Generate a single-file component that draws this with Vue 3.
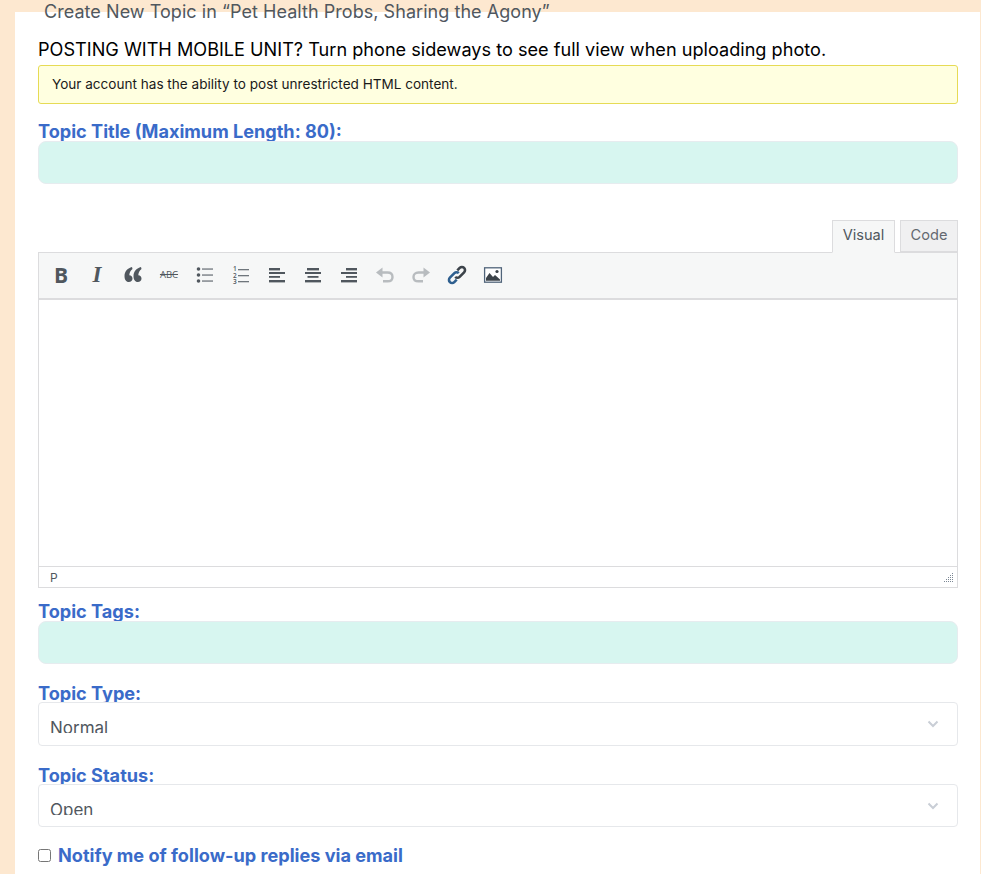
<script setup>
// each row of the align icons: [x, y, width, height]
const alignIcons = [
  { name: 'left', rows: [[2, 3, 11, 2.4], [2, 7, 16, 2], [2, 11, 11, 1.8], [2, 15, 16, 2.4]] },
  { name: 'center', rows: [[4, 3, 12, 2.4], [2, 7, 16, 2], [4.500, 11, 11, 1.8], [2, 15, 16, 2.4]] },
  { name: 'right', rows: [[7, 3, 11, 2.4], [2, 7, 16, 2], [7, 11, 11, 1.8], [2, 15, 16, 2.4]] }
]
</script>

<template>
  <div class="page">
    <div class="card">
      <h2 class="heading">Create New Topic in “Pet Health Probs, Sharing the Agony”</h2>
      <p class="mobile-note">POSTING WITH MOBILE UNIT? Turn phone sideways to see full view when uploading photo.</p>
      <div class="notice">Your account has the ability to post unrestricted HTML content.</div>

      <label class="field-label title-label">Topic Title (Maximum Length: 80):</label>
      <input class="text-input" type="text" />

      <div class="editor-tabs">
        <button class="tab tab-active" type="button">Visual</button>
        <button class="tab" type="button">Code</button>
      </div>
      <div class="editor">
        <div class="toolbar">
          <span class="tool glyph-b">B</span>
          <span class="tool glyph-i">I</span>
          <span class="tool">
            <svg width="20" height="20" viewBox="0 0 20 20">
              <path fill="#50575e" d="M9 2C5 3 1.500 6 1.500 11c0 3.500 1.500 6 4.300 6 2.200 0 3.700-1.400 3.700-3.500 0-2-1.300-3.300-3.200-3.300C6.400 8 7.500 5.500 9.500 4z" />
              <path fill="#50575e" d="M18 2c-4 1-7.500 4-7.500 9 0 3.500 1.500 6 4.300 6 2.200 0 3.700-1.400 3.700-3.500 0-2-1.300-3.300-3.200-3.300.1-2.200 1.200-4.700 3.200-6.200z" />
            </svg>
          </span>
          <span class="tool glyph-abc">ABC</span>
          <span class="tool">
            <svg width="20" height="20" viewBox="0 0 20 20">
              <g fill="#50575e">
                <circle cx="3.500" cy="4" r="1.800" />
                <circle cx="3.500" cy="10" r="1.800" />
                <circle cx="3.500" cy="16" r="1.800" />
              </g>
              <g fill="#6f767c">
                <rect x="7" y="3.400" width="11" height="1.300" />
                <rect x="7" y="9.400" width="11" height="1.300" />
                <rect x="7" y="15.400" width="11" height="1.300" />
              </g>
            </svg>
          </span>
          <span class="tool">
            <svg width="20" height="20" viewBox="0 0 20 20">
              <g fill="#50575e" font-family="Open Sans, sans-serif" font-size="6.500" font-weight="600">
                <text x="2" y="6">1</text>
                <text x="2" y="12.500">2</text>
                <text x="2" y="19">3</text>
              </g>
              <g fill="#6f767c">
                <rect x="7" y="4" width="11" height="1.300" />
                <rect x="7" y="10" width="11" height="1.300" />
                <rect x="7" y="16" width="11" height="1.300" />
              </g>
            </svg>
          </span>
          <span v-for="icon in alignIcons" :key="icon.name" class="tool">
            <svg width="20" height="20" viewBox="0 0 20 20" fill="#50575e">
              <rect v-for="(r, i) in icon.rows" :key="i" :x="r[0]" :y="r[1]" :width="r[2]" :height="r[3]" />
            </svg>
          </span>
          <span class="tool">
            <svg width="20" height="20" viewBox="0 0 20 20" fill="none">
              <path stroke="#b8bcbf" stroke-width="2.400" d="M6 7.500h6.500c3.200 0 5 1.900 5 4.400s-1.800 4.400-5 4.400H8" />
              <path fill="#b8bcbf" d="M1 7.500 7.500 2.500v10z" />
            </svg>
          </span>
          <span class="tool">
            <svg width="20" height="20" viewBox="0 0 20 20" fill="none">
              <path stroke="#b8bcbf" stroke-width="2.400" d="M14 7.500H7.500c-3.200 0-5 1.900-5 4.400s1.800 4.400 5 4.400H12" />
              <path fill="#b8bcbf" d="M19 7.500 12.500 2.500v10z" />
            </svg>
          </span>
          <span class="tool">
            <svg width="20" height="20" viewBox="0 0 20 20" fill="none" stroke-width="2.600">
              <path stroke="#3c434a" d="M8.200 11.800a3.100 3.100 0 0 0 4.400 0l4.500-4.500a3.100 3.100 0 0 0-4.400-4.400l-2.400 2.400" />
              <path stroke="#2e5f8f" d="M11.800 8.200a3.100 3.100 0 0 0-4.400 0l-4.500 4.500a3.100 3.100 0 0 0 4.400 4.400l2.400-2.400" />
            </svg>
          </span>
          <span class="tool">
            <svg width="20" height="20" viewBox="0 0 20 20">
              <rect x="1.600" y="2.800" width="16.800" height="14.400" fill="#fff" stroke="#50647a" stroke-width="1.300" />
              <path fill="#3c434a" d="M3 15.800V13l3.500-5 3.500 4 2-2 5 4.500v1.300z" />
              <circle cx="14" cy="6.500" r="1.600" fill="#3c434a" />
            </svg>
          </span>
        </div>
        <div class="editor-body"></div>
        <div class="statusbar">
          <span>P</span>
          <svg class="resize-grip" width="11" height="11" viewBox="0 0 11 11">
            <g fill="#7b8794">
              <rect x="9" y="1" width="1" height="1" />
              <rect x="7" y="3" width="1" height="1" /><rect x="9" y="3" width="1" height="1" />
              <rect x="5" y="5" width="1" height="1" /><rect x="7" y="5" width="1" height="1" /><rect x="9" y="5" width="1" height="1" />
              <rect x="3" y="7" width="1" height="1" /><rect x="5" y="7" width="1" height="1" /><rect x="7" y="7" width="1" height="1" /><rect x="9" y="7" width="1" height="1" />
              <rect x="1" y="9" width="1" height="1" /><rect x="3" y="9" width="1" height="1" /><rect x="5" y="9" width="1" height="1" /><rect x="7" y="9" width="1" height="1" /><rect x="9" y="9" width="1" height="1" />
            </g>
          </svg>
        </div>
      </div>

      <label class="field-label tags-label">Topic Tags:</label>
      <input class="text-input" type="text" />

      <label class="field-label type-label">Topic Type:</label>
      <div class="select-box"><span class="select-text">Normal</span>
        <svg class="chevron" width="12" height="8" viewBox="0 0 12 8" fill="none">
          <path d="M1.500 1.500 6 6l4.500-4.500" stroke="#c9ced6" stroke-width="2" />
        </svg>
      </div>

      <label class="field-label status-label">Topic Status:</label>
      <div class="select-box status-box"><span class="select-text">Open</span>
        <svg class="chevron" width="12" height="8" viewBox="0 0 12 8" fill="none">
          <path d="M1.500 1.500 6 6l4.500-4.500" stroke="#c9ced6" stroke-width="2" />
        </svg>
      </div>

      <label class="notify">
        <input type="checkbox" />
        <span>Notify me of follow-up replies via email</span>
      </label>
    </div>
  </div>
</template>

<style scoped>
.page {
  height: 874px;
  overflow: hidden;
  padding-top: 12px;
  padding-left: 15px;
  padding-right: 1px;
  box-sizing: border-box;
  background: #fde8d0;
  font-family: Inter, "Liberation Sans", sans-serif;
}

.card {
  display: flow-root;
  height: 862px;
  background: #fff;
  padding: 0 22px 0 23px;
  box-sizing: border-box;
}

.heading {
  margin: -12px 0 12px 6px;
  height: 24px;
  font-size: 18px;
  line-height: 24px;
  font-weight: 400;
  color: #50575e;
  letter-spacing: 0.05px;
}

.mobile-note {
  margin: 0;
  height: 29px;
  font-size: 18.13px;
  line-height: 26px;
  letter-spacing: 0.01px;
  color: #000;
}

.notice {
  height: 39px;
  box-sizing: border-box;
  border: 1px solid #e6db55;
  border-radius: 3px;
  background: #ffffe0;
  padding: 0 13px;
  font-size: 13.57px;
  line-height: 36px;
  color: #1a1a1a;
}

.field-label {
  display: block;
  height: 21px;
  overflow: hidden;
  font-size: 18.13px;
  line-height: 22px;
  font-weight: 700;
  color: #3a6bc9;
}

.title-label {
  margin-top: 16px;
}

.text-input {
  display: block;
  width: 100%;
  height: 43px;
  box-sizing: border-box;
  border: 1px solid #e6ecef;
  border-radius: 8px;
  background: #d7f6f0;
  outline: none;
}

.editor-tabs {
  display: flex;
  justify-content: flex-end;
  gap: 5px;
  margin-top: 36px;
  height: 33px;
  position: relative;
  z-index: 1;
}

.tab {
  width: 58px;
  height: 32px;
  padding: 0 0 2px;
  box-sizing: border-box;
  border: 1px solid #dcdcde;
  background: #f0f0f1;
  color: #646970;
  font-family: inherit;
  font-size: 14.6px;
}

.tab-active {
  width: 63px;
  height: 33px;
  padding-bottom: 3px;
  background: #f6f7f7;
  border-bottom-color: #f6f7f7;
  color: #50575e;
}

.editor {
  margin-top: -1px;
  border: 1px solid #dcdcde;
  height: 336px;
  box-sizing: border-box;
  display: flex;
  flex-direction: column;
}

.toolbar {
  display: flex;
  align-items: center;
  height: 43px;
  padding: 0 4px 2px;
  background: #f6f7f7;
  border-bottom: 2px solid #dcdcde;
  flex: none;
}

.tool {
  width: 36px;
  height: 20px;
  display: flex;
  align-items: center;
  justify-content: center;
  color: #50575e;
}

.glyph-b {
  font-family: "Open Sans", sans-serif;
  font-size: 21px;
  font-weight: 700;
}

.glyph-i {
  font-family: "Liberation Serif", serif;
  font-size: 23px;
  font-weight: 700;
  font-style: italic;
}

.glyph-abc {
  font-family: "Open Sans", sans-serif;
  font-size: 9.5px;
  font-weight: 400;
  text-decoration: line-through;
}

.editor-body {
  flex: 1;
  background: #fff;
  border-bottom: 1px solid #dcdcde;
}

.statusbar {
  height: 20px;
  flex: none;
  display: flex;
  align-items: center;
  justify-content: space-between;
  padding: 0 3px 0 11px;
  font-size: 12px;
  color: #50575e;
}

.tags-label {
  margin-top: 12px;
}

.type-label {
  margin-top: 18px;
  height: 20px;
}

.status-label {
  margin-top: 18px;
  height: 20px;
}

.select-box {
  position: relative;
  height: 44px;
  box-sizing: border-box;
  border: 1px solid #e6e8eb;
  border-radius: 4px;
  background: #fff;
  padding: 12px 11px 0;
  overflow: hidden;
}

.status-box {
  height: 43px;
}

.select-text {
  display: block;
  height: 18px;
  overflow: hidden;
  font-size: 17px;
  line-height: 26px;
  color: #50575e;
}

.chevron {
  position: absolute;
  right: 18px;
  top: 17px;
}

.notify {
  display: flex;
  align-items: center;
  gap: 7px;
  margin-top: 16px;
  font-size: 18.13px;
  font-weight: 700;
  line-height: 24px;
  color: #3a6bc9;
}

.notify input {
  margin: 0;
  width: 13px;
  height: 13px;
}
</style>

<style>
html, body {
  margin: 0;
  background: #fde8d0;
}
</style>
